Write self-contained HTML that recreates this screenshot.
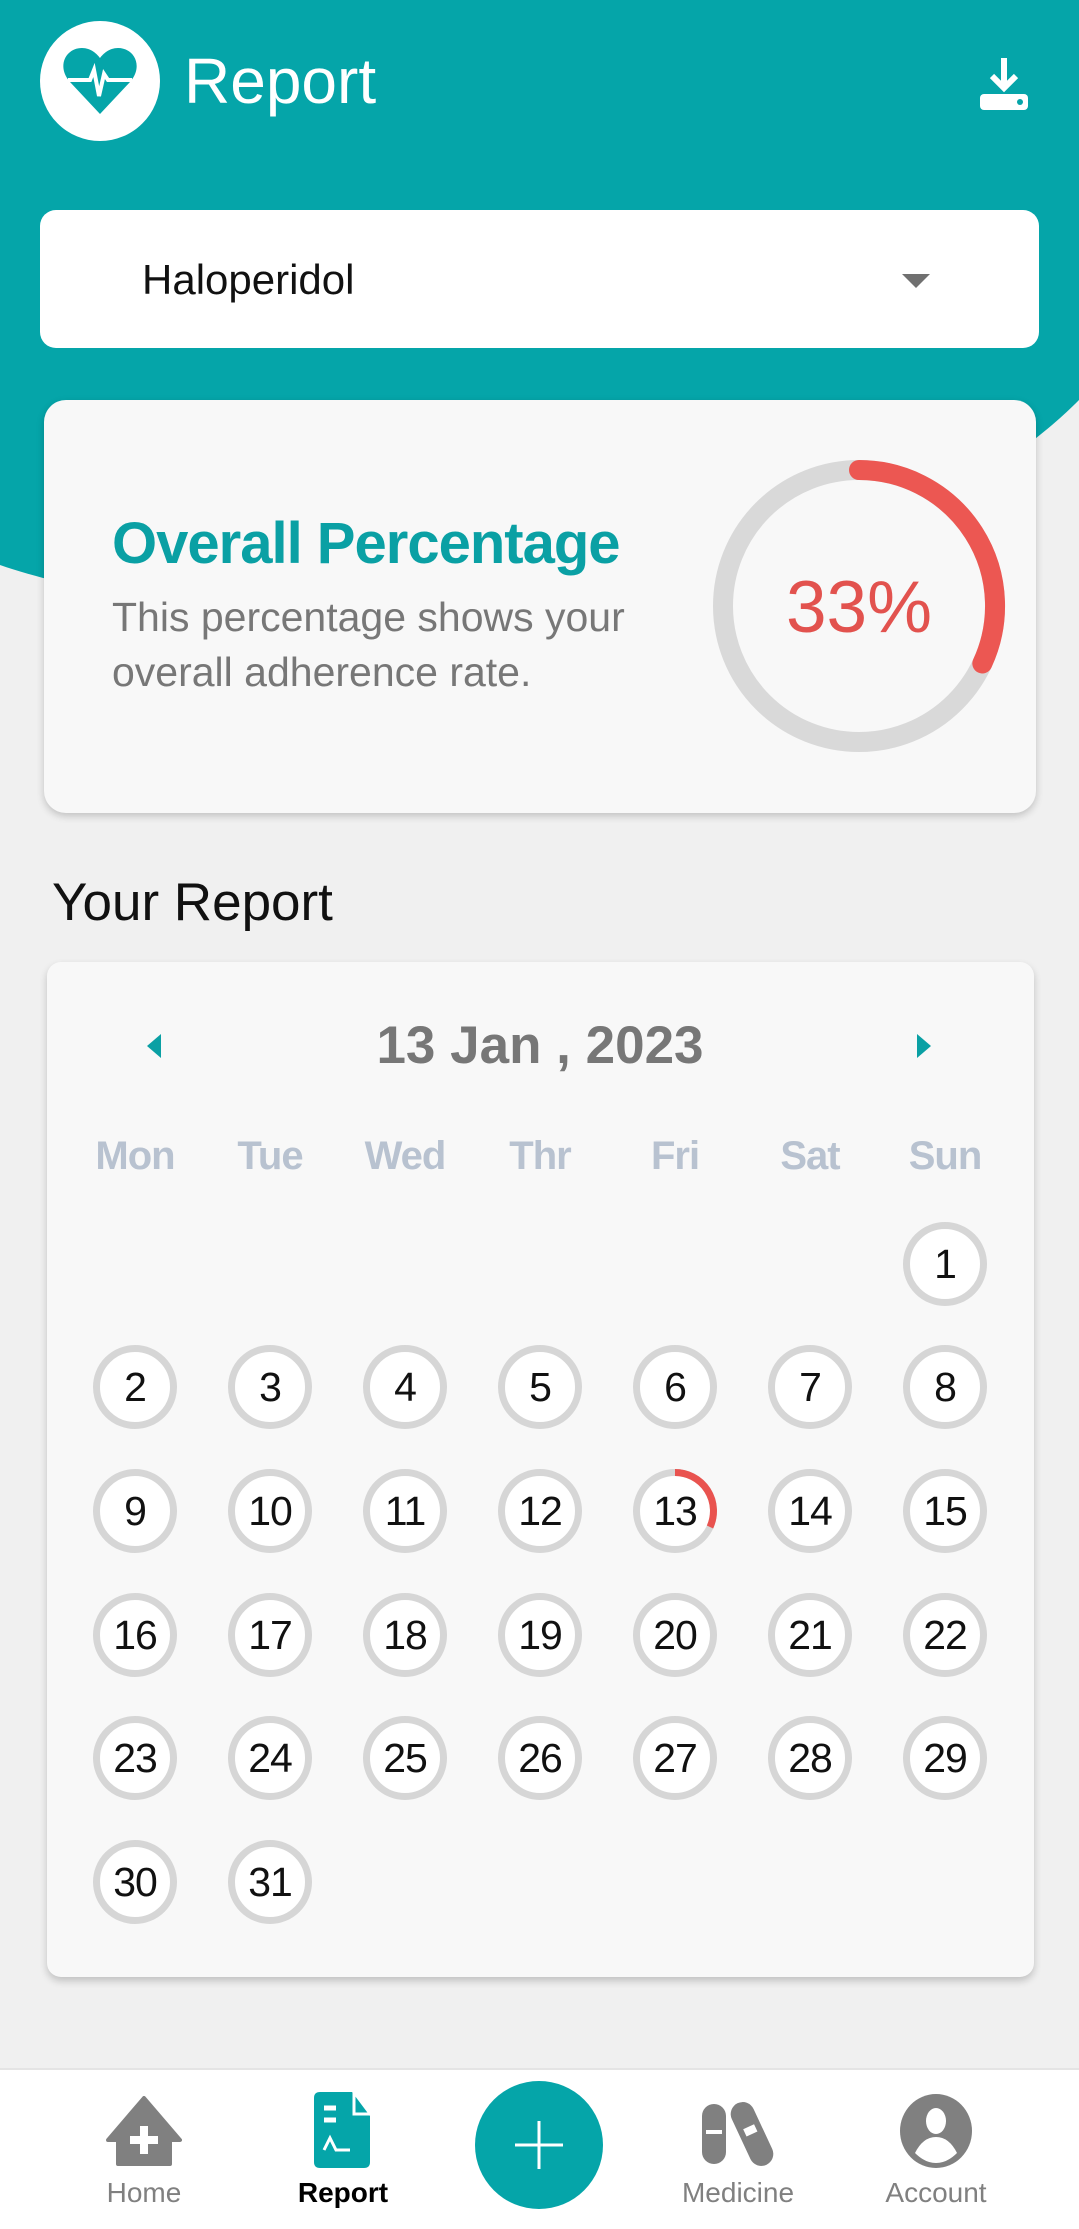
<!DOCTYPE html>
<html><head><meta charset="utf-8"><style>
*{margin:0;padding:0;box-sizing:border-box}
body{width:1079px;height:2229px;background:#f0f0f0;font-family:"Liberation Sans",sans-serif;position:relative;overflow:hidden}
.abs{position:absolute}
.d{position:absolute;width:84px;height:84px;border-radius:50%;border:7px solid #d6d6d6;background:#fff;display:flex;align-items:center;justify-content:center;font-size:41px;color:#111;letter-spacing:-1px}
.wd{position:absolute;top:1134px;width:120px;text-align:center;font-size:40px;font-weight:bold;color:#b8c2d0;letter-spacing:-1px}
.lab{position:absolute;top:2177px;width:160px;text-align:center;font-size:28px;color:#808080}
</style></head><body>
<svg class="abs" style="left:0;top:0" width="1079" height="700"><path d="M0,0H1079V400C1010,470 800,620 480,620C280,620 100,600 0,565Z" fill="#05a5a9"/></svg>
<div class="abs" style="left:40px;top:21px;width:120px;height:120px;border-radius:50%;background:#fff"></div>
<svg class="abs" style="left:60px;top:44px" width="80" height="76" viewBox="0 0 80 76"><path d="M40,70 L10,38 C-4,22 6,4 22,4 C31,4 37,10 40,14 C43,10 49,4 58,4 C74,4 84,22 70,38 Z" fill="#05a5a9"/><path d="M8,36 H30 L34,26 L39,52 L44,30 L48,36 H72" fill="none" stroke="#fff" stroke-width="4"/></svg>
<div class="abs" style="left:184px;top:44px;font-size:64px;color:#fff">Report</div>
<svg class="abs" style="left:978px;top:56px" width="52" height="56" viewBox="0 0 52 56"><path d="M26,2 V30 M14,20 L26,32 L38,20" stroke="#fff" stroke-width="6" fill="none"/><rect x="2" y="38" width="48" height="16" rx="4" fill="#fff"/><circle cx="42" cy="46" r="3" fill="#05a5a9"/></svg>
<div class="abs" style="left:40px;top:210px;width:999px;height:138px;background:#fff;border-radius:16px"></div>
<div class="abs" style="left:142px;top:256px;font-size:42px;color:#111">Haloperidol</div>
<div class="abs" style="left:902px;top:274px;width:0;height:0;border-left:14px solid transparent;border-right:14px solid transparent;border-top:14px solid #707070"></div>
<div class="abs" style="left:44px;top:400px;width:992px;height:413px;background:#f8f8f8;border-radius:22px;box-shadow:0 3px 8px rgba(0,0,0,.2)"></div>
<div class="abs" style="left:112px;top:510px;font-size:58px;font-weight:bold;color:#0aa0a4;letter-spacing:-1px">Overall Percentage</div>
<div class="abs" style="left:112px;top:590px;font-size:41px;line-height:55px;color:#777">This percentage shows your<br>overall adherence rate.</div>
<svg class="abs" style="left:709px;top:456px" width="300" height="300" viewBox="0 0 300 300"><circle cx="150" cy="150" r="136" fill="none" stroke="#d9d9d9" stroke-width="20"/><path d="M150,14 A136,136 0 0 1 273.3,207.5" fill="none" stroke="#ec5752" stroke-width="20" stroke-linecap="round"/><text x="150" y="176" text-anchor="middle" font-family="Liberation Sans" font-size="73" fill="#e2524e">33%</text></svg>
<div class="abs" style="left:52px;top:872px;font-size:53px;color:#111">Your Report</div>
<div class="abs" style="left:47px;top:962px;width:987px;height:1015px;background:#f8f8f8;border-radius:14px;box-shadow:0 4px 8px rgba(0,0,0,.2)"></div>
<div class="abs" style="left:147px;top:1034px;width:0;height:0;border-top:12px solid transparent;border-bottom:12px solid transparent;border-right:14px solid #0aa0a4"></div>
<div class="abs" style="left:917px;top:1034px;width:0;height:0;border-top:12px solid transparent;border-bottom:12px solid transparent;border-left:14px solid #0aa0a4"></div>
<div class="abs" style="left:240px;top:1015px;width:600px;text-align:center;font-size:53px;font-weight:bold;color:#777">13 Jan , 2023</div>
<div class="wd" style="left:75px">Mon</div><div class="wd" style="left:210px">Tue</div><div class="wd" style="left:345px">Wed</div><div class="wd" style="left:480px">Thr</div><div class="wd" style="left:615px">Fri</div><div class="wd" style="left:750px">Sat</div><div class="wd" style="left:885px">Sun</div>
<div class="d" style="left:903px;top:1222px">1</div>
<div class="d" style="left:93px;top:1345px">2</div><div class="d" style="left:228px;top:1345px">3</div><div class="d" style="left:363px;top:1345px">4</div><div class="d" style="left:498px;top:1345px">5</div><div class="d" style="left:633px;top:1345px">6</div><div class="d" style="left:768px;top:1345px">7</div><div class="d" style="left:903px;top:1345px">8</div>
<div class="d" style="left:93px;top:1469px">9</div><div class="d" style="left:228px;top:1469px">10</div><div class="d" style="left:363px;top:1469px">11</div><div class="d" style="left:498px;top:1469px">12</div><div class="d" style="left:633px;top:1469px">13</div><div class="d" style="left:768px;top:1469px">14</div><div class="d" style="left:903px;top:1469px">15</div>
<div class="d" style="left:93px;top:1593px">16</div><div class="d" style="left:228px;top:1593px">17</div><div class="d" style="left:363px;top:1593px">18</div><div class="d" style="left:498px;top:1593px">19</div><div class="d" style="left:633px;top:1593px">20</div><div class="d" style="left:768px;top:1593px">21</div><div class="d" style="left:903px;top:1593px">22</div>
<div class="d" style="left:93px;top:1716px">23</div><div class="d" style="left:228px;top:1716px">24</div><div class="d" style="left:363px;top:1716px">25</div><div class="d" style="left:498px;top:1716px">26</div><div class="d" style="left:633px;top:1716px">27</div><div class="d" style="left:768px;top:1716px">28</div><div class="d" style="left:903px;top:1716px">29</div>
<div class="d" style="left:93px;top:1840px">30</div><div class="d" style="left:228px;top:1840px">31</div>
<svg class="abs" style="left:633px;top:1469px" width="84" height="84" viewBox="0 0 84 84"><path d="M42,3.5 A38.5,38.5 0 0 1 77,58" fill="none" stroke="#e9534f" stroke-width="7"/></svg>
<div class="abs" style="left:0;top:2068px;width:1079px;height:161px;background:#fff;border-top:2px solid #e4e4e4"></div>
<svg class="abs" style="left:106px;top:2096px" width="76" height="70" viewBox="0 0 76 70"><path d="M38,2 L74,44 L64,44 V68 H12 V44 H2 Z" fill="#808080" stroke="#808080" stroke-width="4" stroke-linejoin="round"/><path d="M38,30 V58 M24,44 H52" stroke="#fff" stroke-width="8"/></svg>
<svg class="abs" style="left:314px;top:2092px" width="56" height="76" viewBox="0 0 56 76"><path d="M6,0 H38 L56,24 V70 Q56,76 50,76 H6 Q0,76 0,70 V6 Q0,0 6,0Z" fill="#05a5a9"/><path d="M40,0 V22 H56" fill="none" stroke="#fff" stroke-width="3"/><path d="M10,16 H22 M10,28 H22" stroke="#fff" stroke-width="5"/><path d="M10,58 L16,46 L22,58 H36" fill="none" stroke="#fff" stroke-width="3"/></svg>
<div class="abs" style="left:475px;top:2081px;width:128px;height:128px;border-radius:50%;background:#05a5a9"></div>
<svg class="abs" style="left:515px;top:2121px" width="48" height="48"><path d="M24,0V48M0,24H48" stroke="#fff" stroke-width="3"/></svg>
<svg class="abs" style="left:700px;top:2102px" width="78" height="64" viewBox="0 0 78 64"><rect x="2" y="2" width="24" height="60" rx="12" fill="#808080"/><rect x="40" y="-2" width="24" height="68" rx="12" fill="#808080" transform="rotate(-25 52 32)"/><rect x="46" y="24" width="12" height="8" fill="#fff" transform="rotate(-25 52 32)"/><rect x="6" y="28" width="16" height="4" fill="#fff"/></svg>
<svg class="abs" style="left:899px;top:2093px" width="74" height="76" viewBox="0 0 74 76"><ellipse cx="37" cy="38" rx="36" ry="37" fill="#808080"/><ellipse cx="37" cy="28" rx="10" ry="13" fill="#fff"/><path d="M16,60 Q24,44 37,44 Q50,44 58,60 Q48,70 37,70 Q26,70 16,60Z" fill="#fff"/></svg>
<div class="lab" style="left:64px">Home</div>
<div class="lab" style="left:263px;color:#000;font-weight:bold">Report</div>
<div class="lab" style="left:658px">Medicine</div>
<div class="lab" style="left:856px">Account</div>
</body></html>
